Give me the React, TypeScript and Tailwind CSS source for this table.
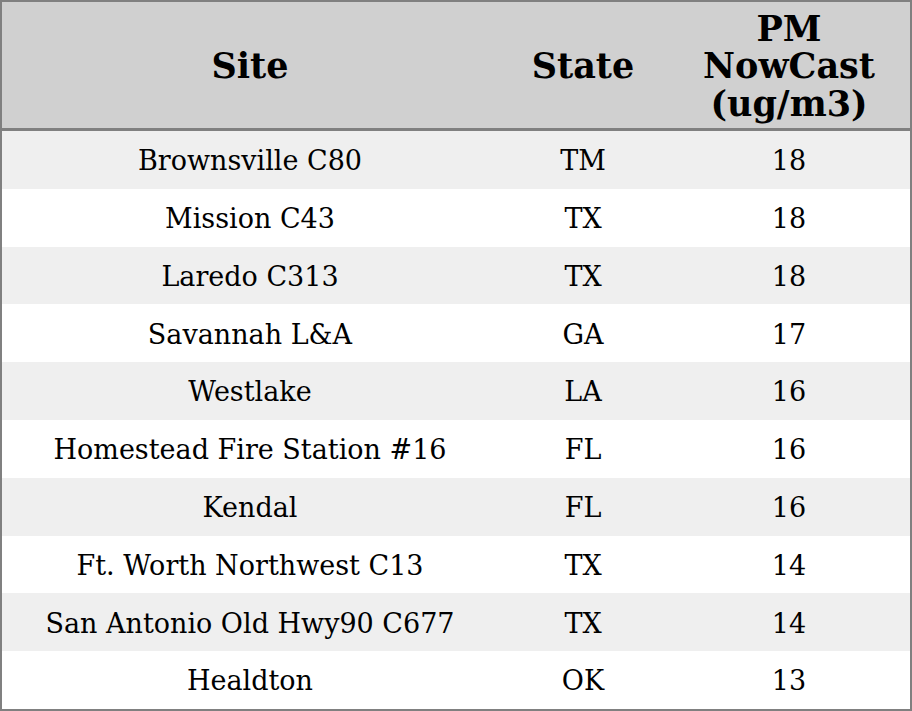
const rows = [
  ['Brownsville C80', 'TM', '18'],
  ['Mission C43', 'TX', '18'],
  ['Laredo C313', 'TX', '18'],
  ['Savannah L&A', 'GA', '17'],
  ['Westlake', 'LA', '16'],
  ['Homestead Fire Station #16', 'FL', '16'],
  ['Kendal', 'FL', '16'],
  ['Ft. Worth Northwest C13', 'TX', '14'],
  ['San Antonio Old Hwy90 C677', 'TX', '14'],
  ['Healdton', 'OK', '13'],
]

export default function App() {
  return (
    <div className="h-[711px] w-[912px] overflow-hidden bg-white font-['DejaVu_Serif',serif] text-black">
      <div className="flex h-full flex-col border-2 border-[#808080]">
        <div className="flex h-[129px] shrink-0 items-center border-b-[3px] border-[#808080] bg-[#d0d0d0] pt-[2px] text-[35px] font-bold leading-[37.5px]">
          <div className="w-[496px] text-center">Site</div>
          <div className="w-[170px] text-center">State</div>
          <div className="flex-1 text-center">
            PM
            <br />
            NowCast
            <br />
            (ug/m3)
          </div>
        </div>
        {rows.map(([site, state, value], i) => (
          <div
            key={site}
            className={`flex h-[57.8px] shrink-0 items-center pt-[3px] text-[27px] ${i % 2 === 0 ? 'bg-[#efefef]' : 'bg-white'}`}
          >
            <div className="w-[496px] text-center">{site}</div>
            <div className="w-[170px] text-center">{state}</div>
            <div className="flex-1 text-center">{value}</div>
          </div>
        ))}
      </div>
    </div>
  )
}
